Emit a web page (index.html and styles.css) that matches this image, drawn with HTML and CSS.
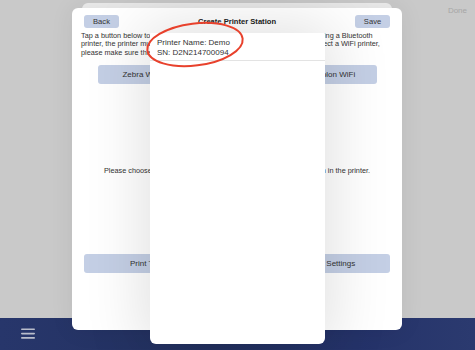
FILE: index.html
```html
<!DOCTYPE html>
<html>
<head>
<meta charset="utf-8">
<link rel="stylesheet" href="styles.css">
</head>
<body>
<div class="app">
  <div class="main-area">
    <span class="done">Done</span>
  </div>
  <div class="tabbar">
    <svg class="menu" width="15" height="11" viewBox="0 0 15 11">
      <rect x="0" y="0.5" width="14" height="1.6" rx="0.8" fill="#b9bdcb"/>
      <rect x="0" y="4.8" width="14" height="1.6" rx="0.8" fill="#b9bdcb"/>
      <rect x="0" y="9.1" width="14" height="1.6" rx="0.8" fill="#b9bdcb"/>
    </svg>
  </div>
</div>

<div class="sheet-back"></div>

<div class="sheet">
  <div class="sheet-header">
    <button class="btn small">Back</button>
    <div class="title">Create Printer Station</div>
    <button class="btn small">Save</button>
  </div>
  <p class="desc">Tap a button below to select the type of printer you have. If you are connecting a Bluetooth<br>printer, the printer must be paired with this device first in Settings. If you select a WiFi printer,<br>please make sure the printer is on the same network.</p>
  <div class="row three">
    <button class="btn wide">Zebra WiFi</button>
    <button class="btn wide">Zebra Bluetooth</button>
    <button class="btn wide">Bixolon WiFi</button>
  </div>
  <p class="msg">Please choose a printer type above and then enter the details shown in the printer.</p>
  <div class="row two">
    <button class="btn wide">Print Test Page</button>
    <button class="btn wide">Label Printer Settings</button>
  </div>
</div>

<div class="popover">
  <div class="pop-item">
    <div>Printer Name: Demo</div>
    <div>SN: D2N214700094</div>
  </div>
</div>

<svg class="annot" width="475" height="350" viewBox="0 0 475 350">
  <ellipse cx="195" cy="44.5" rx="48" ry="21" transform="rotate(-7 195 44.5)" fill="none" stroke="#e8412c" stroke-width="2"/>
</svg>
</body>
</html>
```
FILE: styles.css
```css
* { box-sizing: border-box; }
html, body { margin: 0; padding: 0; }
body {
  width: 475px;
  height: 350px;
  overflow: hidden;
  font-family: "Liberation Sans", Arial, sans-serif;
  color: #333;
  position: relative;
}
.app {
  display: flex;
  flex-direction: column;
  height: 350px;
}
.main-area {
  flex: 1;
  background: #c9c9c9;
  display: flex;
  justify-content: flex-end;
  padding: 5.5px 8px 0 0;
}
.done {
  font-size: 8px;
  color: #a6a6a6;
  line-height: 10px;
}
.tabbar {
  height: 32px;
  background: linear-gradient(90deg, #27366b 0%, #23315f 45%, #25336a 75%, #2b3a6f 100%);
  display: flex;
  align-items: flex-start;
  padding: 10px 0 0 21px;
}
.menu { display: block; }

.sheet-back {
  position: absolute;
  left: 82px;
  top: 3px;
  width: 310px;
  height: 30px;
  background: #ececec;
  border-radius: 6px;
}
.sheet {
  position: absolute;
  left: 72px;
  top: 8px;
  width: 330px;
  height: 322px;
  background: #fff;
  border-radius: 6px;
  box-shadow: 0 0 24px rgba(0,0,0,0.07);
  display: flex;
  flex-direction: column;
  padding-top: 7px;
}
.sheet-header {
  display: grid;
  grid-template-columns: 35px 1fr 35px;
  align-items: center;
  padding: 0 12px;
}
.title {
  text-align: center;
  font-weight: bold;
  font-size: 7.6px;
  color: #222;
}
.btn {
  border: none;
  background: #c4cfe5;
  color: #333;
  font-family: "Liberation Sans", Arial, sans-serif;
  border-radius: 3px;
  padding: 0;
  margin: 0;
}
.btn.small {
  height: 13px;
  font-size: 7.6px;
}
.btn.wide {
  height: 19px;
  font-size: 8px;
  flex: 1;
}
.desc {
  margin: 3.5px 0 0;
  padding: 0 9px;
  font-size: 7.3px;
  line-height: 8.5px;
  color: #333;
  white-space: nowrap;
}
.row {
  display: flex;
}
.row.three {
  margin-top: 7.5px;
  padding: 0 25px 0 26px;
  gap: 7.5px;
}
.row.two {
  margin-top: 79.5px;
  padding: 0 12px;
  gap: 14px;
}
.row.two .btn.wide { height: 18.5px; }
.msg {
  margin: 82px 0 0;
  text-align: center;
  font-size: 7.3px;
  line-height: 9px;
  color: #333;
}

.popover {
  position: absolute;
  left: 150px;
  top: 33px;
  width: 175px;
  height: 311px;
  background: #fff;
  border-radius: 1px 1px 6px 6px;
  box-shadow: 0 0 60px 8px rgba(0,0,0,0.12);
}
.pop-item {
  padding: 4.6px 7px 1.2px;
  font-size: 8px;
  line-height: 10.6px;
  color: #333;
  border-bottom: 1px solid #e3e3e3;
}
.annot {
  position: absolute;
  left: 0;
  top: 0;
  pointer-events: none;
}
```
